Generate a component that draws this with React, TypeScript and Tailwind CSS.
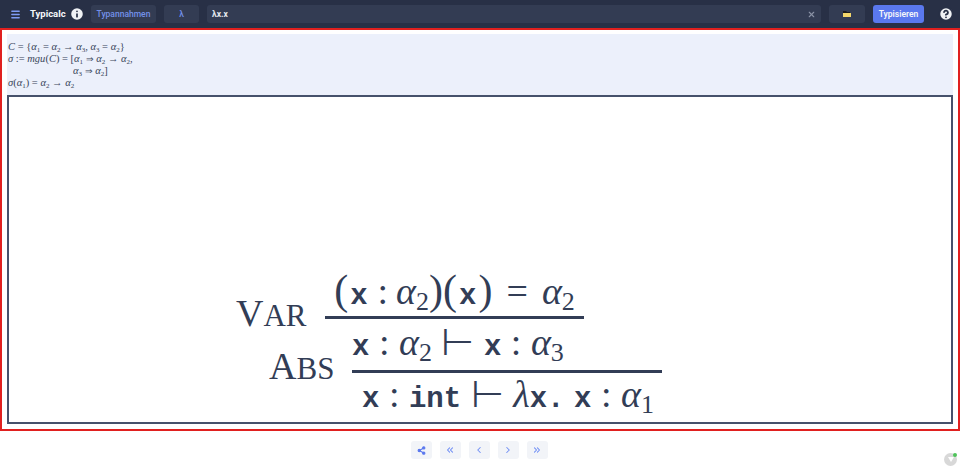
import { Menu, Info, Share2, ChevronsLeft, ChevronLeft, ChevronRight, ChevronsRight, X, CircleHelp } from "lucide-react";

const serif = "font-['Liberation_Serif',serif]";
const mono = "font-['Liberation_Mono',monospace] font-bold";

function A({ n }: { n: number }) {
  return (
    <span>
      <i className="text-[38px]">α</i>
      <span className="text-[26px] leading-none align-[-6px]">{n}</span>
    </span>
  );
}

function M({ children }: { children: string }) {
  return <span className={mono + " text-[29px]"}>{children}</span>;
}

function Sm({ n }: { n: number }) {
  return (
    <span>
      <i>α</i>
      <span className="text-[7px] leading-none align-[-2px]">{n}</span>
    </span>
  );
}

function To() {
  return <span className="text-[9px]">⇒</span>;
}

function NavBtn({ children }: { children: React.ReactNode }) {
  return (
    <button className="w-[21px] h-[18px] rounded-[3px] bg-[#f2f4f8] flex items-center justify-center text-[#6d8cf5]">
      {children}
    </button>
  );
}

export default function App() {
  return (
    <div className="w-[960px] h-[469px] bg-white flex flex-col overflow-hidden font-['Roboto',sans-serif]">
      <header className="h-[28px] shrink-0 bg-[#283046] flex items-center pl-[10px] pr-[6px]">
        <Menu size={11} strokeWidth={3} className="text-[#7f9cf5]" />
        <span className="ml-[9px] w-[32px] text-[9.5px] font-bold text-[#f5f7fa] whitespace-nowrap">Typicalc</span>
        <Info size={16} strokeWidth={2.6} className="ml-[7px] text-[#283046] fill-[#f0f2f5]" />
        <div className="ml-[6px] w-[65px] h-[18px] rounded-[3px] bg-[#333c53] flex items-center justify-center text-[8.5px] font-medium text-[#7391ea]">
          Typannahmen
        </div>
        <div className="ml-[8px] w-[35px] h-[18px] rounded-[3px] bg-[#333c53] flex items-center justify-center text-[8.5px] font-medium text-[#7391ea]">
          λ
        </div>
        <div className="ml-[8px] w-[614px] h-[18px] rounded-[3px] bg-[#333c53] flex items-center justify-between pl-[5px] pr-[5px] text-[8.5px] font-bold text-[#e4e8ee]">
          <span>λx.x</span>
          <X size={9} strokeWidth={3} className="text-[#8a93a6]" />
        </div>
        <div className="ml-[8px] w-[36px] h-[18px] rounded-[3px] bg-[#333c53] flex items-center justify-center">
          <svg width="8" height="6" viewBox="0 0 8 6">
            <path d="M0 1h3l1 1h4v4H0z" fill="#f4d76b" />
            <path d="M0 0h3l1 1h3v1H0z" fill="#1c1c1c" />
          </svg>
        </div>
        <button className="ml-[8px] w-[51px] h-[18px] rounded-[3px] bg-[#5a78ee] flex items-center justify-center text-[8.5px] font-semibold text-[#f5f7fa]">
          Typisieren
        </button>
        <CircleHelp size={16} strokeWidth={2.8} className="ml-[14px] text-[#283046] fill-[#f0f2f5]" />
      </header>
      <main className="h-[403px] shrink-0 border-[2.5px] border-[#e0201f] bg-white flex flex-col pt-[4px] pl-[5px] pr-[5px] pb-[5px]">
        <section className={"h-[61px] shrink-0 bg-[#ecf0fb] pl-[1px] pt-[7px] text-[10.5px] leading-[12px] text-[#39455a] whitespace-nowrap " + serif}>
          <div className="h-[12px]"><i>C</i> = {"{"}<Sm n={1} /> = <Sm n={2} /> → <Sm n={3} />, <Sm n={3} /> = <Sm n={2} />{"}"}</div>
          <div className="h-[12px]"><i>σ</i> := <i>mgu</i>(<i>C</i>) = [<Sm n={1} /> <To /> <Sm n={2} /> → <Sm n={2} />,</div>
          <div className="h-[12px] pl-[65px]"><Sm n={3} /> <To /> <Sm n={2} />]</div>
          <div className="h-[12px]"><i>σ</i>(<Sm n={1} />) = <Sm n={2} /> → <Sm n={2} /></div>
        </section>
        <section className={"flex-1 border-2 border-[#46516b] flex flex-col justify-end pl-[227px] pb-[3px] text-[38px] text-[#323d56] " + serif}>
          <div className="flex items-end">
            <span className="w-[89px] shrink-0 leading-[20px] -mb-[7px]">V<span className="text-[31px]">AR</span></span>
            <div className="w-[259px] h-[46px] leading-[34px] border-b-[3px] border-[#323d56] text-center whitespace-nowrap">
              <span className="text-[42px]">(</span><span className="mx-[2px]"><M>x</M></span><span className="mx-[8px]">:</span><A n={2} /><span className="text-[42px]">)(</span><span className="mx-[2px]"><M>x</M></span><span className="text-[42px]">)</span><span className="mx-[14px]">=</span><A n={2} />
            </div>
          </div>
          <div className="flex items-end pl-[33px]">
            <span className="w-[83px] shrink-0 leading-[20px] mb-[40px]">A<span className="text-[31px]">BS</span></span>
            <div className="w-[310px] whitespace-nowrap">
              <div className="h-[54px] leading-[46px] border-b-[3px] border-[#323d56]">
                <M>x</M> : <A n={2} /> ⊢ <M>x</M> : <A n={3} />
              </div>
              <div className="pl-[10px] h-[46px] leading-[42px]">
                <M>x</M> : <M>int</M> ⊢ <i>λ</i><M>x.</M> <M>x</M> : <A n={1} />
              </div>
            </div>
          </div>
        </section>
      </main>
      <footer className="flex-1 relative flex items-start justify-center gap-[8px] pt-[10px] pr-[2px]">
        <NavBtn><Share2 size={9} strokeWidth={3} className="fill-[#5a78ee] text-[#5a78ee]" /></NavBtn>
        <NavBtn><ChevronsLeft size={10} strokeWidth={2.5} /></NavBtn>
        <NavBtn><ChevronLeft size={10} strokeWidth={2.5} /></NavBtn>
        <NavBtn><ChevronRight size={10} strokeWidth={2.5} /></NavBtn>
        <NavBtn><ChevronsRight size={10} strokeWidth={2.5} /></NavBtn>
        <div className="absolute right-[3px] bottom-[3px] w-[13px] h-[13px] rounded-full bg-[#d8d8d8] flex items-center justify-center">
          <span className="absolute top-0 right-0 w-[4px] h-[4px] rounded-full bg-[#4fc35a]" />
          <svg width="6" height="5" viewBox="0 0 6 5"><path d="M0 0h6L3 5z" fill="#fff" /></svg>
        </div>
      </footer>
    </div>
  );
}
